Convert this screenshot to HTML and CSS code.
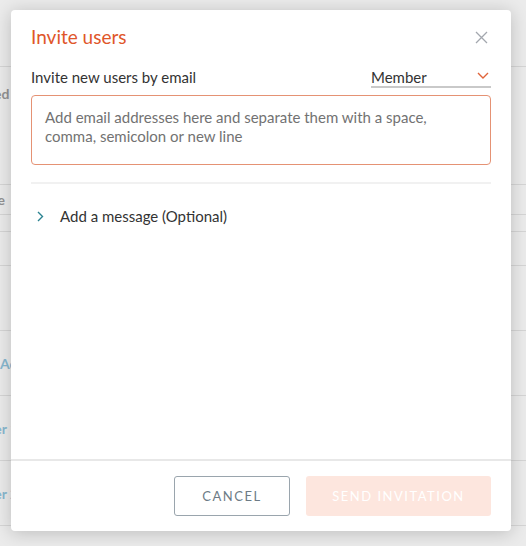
FILE: index.html
```html
<!DOCTYPE html>
<html lang="en">
<head>
    <meta charset="UTF-8">
    <meta name="viewport" content="width=device-width, initial-scale=1.0">
    <title>Invite users</title>
    <link rel="stylesheet" href="styles.css">
</head>
<body>
    <!-- page behind the dialog -->
    <div class="page">
        <div class="row row-top"></div>
        <div class="row row-tall"><span class="cell grey">Sorted</span></div>
        <div class="row row-mid"><span class="cell grey">Name</span></div>
        <div class="row row-thin"></div>
        <div class="row row-short"></div>
        <div class="row row-user"></div>
        <div class="row row-user"><span class="cell blue">Add</span></div>
        <div class="row row-user"><span class="cell blue shift">Member 1</span></div>
        <div class="row row-user"><span class="cell blue shift">Member 2</span></div>
        <div class="row row-last"></div>
    </div>

    <div class="overlay"></div>

    <div class="modal">
        <div class="modal-header">
            <h2 class="modal-title">Invite users</h2>
            <button class="close" aria-label="Close">
                <svg width="13" height="13" viewBox="0 0 13 13"><path d="M1 1L12 12M12 1L1 12" stroke="#a3a7ae" stroke-width="1.3" fill="none"/></svg>
            </button>
        </div>

        <div class="modal-body">
            <div class="invite-row">
                <label class="label">Invite new users by email</label>
                <div class="role-select">
                    <span>Member</span>
                    <svg width="12" height="7" viewBox="0 0 12 7"><path d="M1 1l5 5 5-5" stroke="#e0643a" stroke-width="1.4" fill="none"/></svg>
                </div>
            </div>
            <textarea class="emails" placeholder="Add email addresses here and separate them with a space,&#10;comma, semicolon or new line"></textarea>
            <div class="divider"></div>
            <div class="message-toggle">
                <svg width="7" height="11" viewBox="0 0 7 11"><path d="M1 1l4.5 4.5L1 10" stroke="#2b8391" stroke-width="1.4" fill="none"/></svg>
                <span>Add a message (Optional)</span>
            </div>
        </div>

        <div class="modal-footer">
            <button class="btn btn-cancel">CANCEL</button>
            <button class="btn btn-send" disabled>SEND INVITATION</button>
        </div>
    </div>
</body>
</html>
```

FILE: styles.css
```css
/* General styles */
body {
    font-family: Lato, "Open Sans", sans-serif;
    margin: 0;
    padding: 0;
    background-color: #fafafa;
    overflow: hidden;
    height: 546px;
}

/* Page behind */
.page {
    display: flex;
    flex-direction: column;
}

.row {
    border-bottom: 1px solid #e2e2e2;
    display: flex;
    align-items: center;
    font-size: 14px;
    font-weight: bold;
}

.row-top { height: 66px; }
.row-tall { height: 118px; align-items: flex-start; padding-top: 18px; box-sizing: border-box; }
.row-mid { height: 29px; }
.row-thin { height: 16px; }
.row-short { height: 33px; }
.row-user { height: 64px; }
.row-last { height: 18px; border-bottom: none; }

.cell { white-space: nowrap; }
.grey { color: #9a9a9a; margin-left: -32px; }
.blue { color: #8fc3dc; }
.shift { margin-left: -46px; }

.overlay {
    position: absolute;
    inset: 0;
    background: rgba(60, 60, 60, 0.08);
}

/* Dialog */
.modal {
    position: absolute;
    top: 10px;
    left: 11px;
    width: 500px;
    height: 521px;
    background: #fff;
    border-radius: 4px;
    box-shadow: 0 2px 18px rgba(0, 0, 0, 0.2);
    display: flex;
    flex-direction: column;
}

.modal-header {
    display: flex;
    justify-content: space-between;
    align-items: center;
    padding: 13px 20px 0 20px;
}

.modal-title {
    margin: 0;
    font-size: 19px;
    line-height: 28px;
    font-weight: normal;
    color: #e0562a;
}

.close {
    border: none;
    background: none;
    padding: 0;
    margin-right: 3px;
    display: flex;
}

.modal-body {
    flex: 1;
    padding: 0 20px;
}

.invite-row {
    display: flex;
    justify-content: space-between;
    align-items: flex-end;
    margin-top: 17px;
}

.label {
    font-size: 15px;
    line-height: 18px;
    color: #333;
    margin-bottom: 2px;
}

.role-select {
    width: 120px;
    display: flex;
    justify-content: space-between;
    align-items: center;
    font-size: 15px;
    line-height: 18px;
    color: #333;
    border-bottom: 2px solid #c9c9c9;
}

.role-select svg { margin-right: 2px; margin-top: -4px; }

.emails {
    display: block;
    width: 100%;
    height: 70px;
    margin-top: 7px;
    box-sizing: border-box;
    border: 1px solid #e59274;
    border-radius: 4px;
    padding: 12px 13px;
    font-family: inherit;
    font-size: 15px;
    line-height: 19px;
    resize: none;
    outline: none;
}

.emails::placeholder { color: #727272; }

.divider {
    height: 2px;
    background: #f1f1f1;
    margin-top: 17px;
}

.message-toggle {
    display: flex;
    align-items: center;
    gap: 16px;
    padding: 23px 0 0 6px;
    font-size: 15px;
    line-height: 18px;
    color: #333;
}

/* Footer */
.modal-footer {
    border-top: 2px solid #e8e8e8;
    display: flex;
    justify-content: flex-end;
    gap: 16px;
    padding: 15px 20px 15px 20px;
}

.btn {
    height: 40px;
    font-family: inherit;
    font-size: 13px;
    letter-spacing: 1.5px;
    border-radius: 3px;
}

.btn-cancel {
    width: 116px;
    background: #fff;
    color: #6d7b86;
    border: 1px solid #9aa5ad;
}

.btn-send {
    width: 185px;
    background: #fde6de;
    color: #fff;
    border: none;
}
```
